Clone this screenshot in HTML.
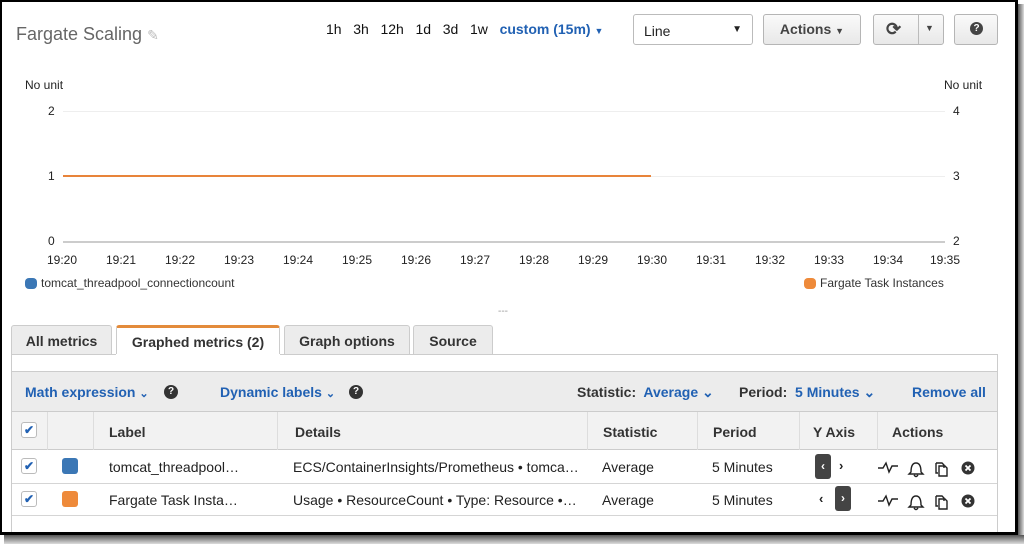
<!DOCTYPE html>
<html><head><meta charset="utf-8"><style>
*{box-sizing:border-box;margin:0;padding:0}
body{width:1024px;height:544px;background:#fff;font-family:"Liberation Sans",Arial,sans-serif;color:#222;position:relative;overflow:hidden}
.a{position:absolute;white-space:nowrap}
.btn{position:absolute;border:1px solid #b5b5b5;border-radius:3px;background:linear-gradient(#fafafa,#e8e8e8);font-size:14px;font-weight:bold;color:#444}
.blue{color:#2161b3}
.tab{position:absolute;top:325px;height:30px;border:1px solid #ccc;border-bottom:none;background:#ececec;font-size:14px;font-weight:bold;color:#333;text-align:center;line-height:30px;border-radius:3px 3px 0 0}
.cell{position:absolute;font-size:14px;line-height:16px}
.vl{position:absolute;width:1px;background:#ddd}
.hl{position:absolute;height:1px;background:#d5d5d5}
.cb{position:absolute;width:16px;height:16px;border:1px solid #bbb;border-radius:3px;background:#fff;color:#2161b3;font-size:12px;line-height:14px;text-align:center;font-weight:bold}
</style></head><body>
<!-- frame -->
<div class="a" style="left:0;top:0;width:1018px;height:535px;border:2px solid #000;border-right-width:3px;border-bottom-width:3px"></div>
<div class="a" style="left:1018px;top:4px;width:6px;height:540px;background:linear-gradient(90deg,#555,#ddd)"></div>
<div class="a" style="left:4px;top:535px;width:1020px;height:9px;background:linear-gradient(#555,#ddd)"></div>

<div class="a" style="left:16px;top:24px;font-size:18px;color:#666">Fargate Scaling <span style="color:#bbb;font-size:14px">✎</span></div>
<div class="a" style="left:326px;top:21px;font-size:14px;color:#111;word-spacing:0">1h&nbsp;&nbsp; 3h&nbsp;&nbsp; 12h&nbsp;&nbsp; 1d&nbsp;&nbsp; 3d&nbsp;&nbsp; 1w&nbsp;&nbsp; <b class="blue">custom (15m)</b> <span class="blue" style="font-size:9px">▼</span></div>
<div class="a" style="left:633px;top:14px;width:120px;height:31px;border:1px solid #bbb;border-radius:3px;font-size:14px;padding:8px 10px">Line<span style="position:absolute;right:10px;top:9px;font-size:10px">▼</span></div>
<div class="btn" style="left:763px;top:14px;width:98px;height:31px;line-height:29px;text-align:center">Actions <span style="font-size:9px">▼</span></div>
<div class="btn" style="left:873px;top:14px;width:71px;height:31px"><span style="position:absolute;left:12px;top:4px;font-size:18px">⟳</span><span style="position:absolute;left:44px;top:0;width:1px;height:29px;background:#bbb"></span><span style="position:absolute;left:51px;top:8px;font-size:9px">▼</span></div>
<div class="btn" style="left:954px;top:14px;width:44px;height:31px"><span style="position:absolute;left:15px;top:7px;width:13px;height:13px;border-radius:50%;background:#444;color:#fff;font-size:10px;line-height:13px;text-align:center">?</span></div>

<!-- chart -->
<div class="a" style="left:25px;top:78px;font-size:12px">No unit</div>
<div class="a" style="left:944px;top:78px;font-size:12px">No unit</div>
<div class="a" style="left:48px;top:104px;font-size:12px">2</div>
<div class="a" style="left:48px;top:169px;font-size:12px">1</div>
<div class="a" style="left:48px;top:234px;font-size:12px">0</div>
<div class="a" style="left:953px;top:104px;font-size:12px">4</div>
<div class="a" style="left:953px;top:169px;font-size:12px">3</div>
<div class="a" style="left:953px;top:234px;font-size:12px">2</div>
<div class="a" style="left:63px;top:111px;width:882px;height:1px;background:#eee"></div>
<div class="a" style="left:63px;top:176px;width:882px;height:1px;background:#eee"></div>
<div class="a" style="left:63px;top:241px;width:882px;height:2px;background:#ccc"></div>
<div class="a" style="left:63px;top:175px;width:588px;height:2px;background:#e8843a"></div>
<div class="a" style="left:0;top:253px;width:1024px;height:16px;font-size:12px">
<span class="a" style="left:47px">19:20</span><span class="a" style="left:106px">19:21</span><span class="a" style="left:165px">19:22</span><span class="a" style="left:224px">19:23</span><span class="a" style="left:283px">19:24</span><span class="a" style="left:342px">19:25</span><span class="a" style="left:401px">19:26</span><span class="a" style="left:460px">19:27</span><span class="a" style="left:519px">19:28</span><span class="a" style="left:578px">19:29</span><span class="a" style="left:637px">19:30</span><span class="a" style="left:696px">19:31</span><span class="a" style="left:755px">19:32</span><span class="a" style="left:814px">19:33</span><span class="a" style="left:873px">19:34</span><span class="a" style="left:930px">19:35</span></div>
<div class="a" style="left:25px;top:278px;width:12px;height:11px;border-radius:4px;background:#3b77b5"></div>
<div class="a" style="left:41px;top:276px;font-size:12px;color:#333">tomcat_threadpool_connectioncount</div>
<div class="a" style="left:804px;top:278px;width:12px;height:11px;border-radius:4px;background:#ee8a3a"></div>
<div class="a" style="left:820px;top:276px;font-size:12px;color:#333">Fargate Task Instances</div>
<div class="a" style="left:498px;top:306px;font-size:10px;color:#999">---</div>

<!-- tabs -->
<div class="tab" style="left:11px;width:101px">All metrics</div>
<div class="tab" style="left:116px;width:164px;background:#fff;border-top:3px solid #e38b3b;height:31px;line-height:28px">Graphed metrics (2)</div>
<div class="tab" style="left:284px;width:126px">Graph options</div>
<div class="tab" style="left:413px;width:80px">Source</div>
<div class="a" style="left:11px;top:354px;width:987px;height:178px;border:1px solid #ccc;border-bottom:none"></div>
<div class="a" style="left:116px;top:354px;width:164px;height:2px;background:#fff"></div>
<div class="a" style="left:12px;top:371px;width:985px;height:41px;background:#ececec;border-top:1px solid #ccc;border-bottom:1px solid #ccc"></div>
<div class="a blue" style="left:25px;top:384px;font-size:14px;font-weight:bold">Math expression <span style="font-size:11px">⌄</span></div>
<div class="a" style="left:164px;top:385px;width:14px;height:14px;border-radius:50%;background:#333;color:#fff;font-size:10px;line-height:14px;text-align:center;font-weight:bold">?</div>
<div class="a blue" style="left:220px;top:384px;font-size:14px;font-weight:bold">Dynamic labels <span style="font-size:11px">⌄</span></div>
<div class="a" style="left:349px;top:385px;width:14px;height:14px;border-radius:50%;background:#333;color:#fff;font-size:10px;line-height:14px;text-align:center;font-weight:bold">?</div>
<div class="a" style="left:577px;top:384px;font-size:14px;font-weight:bold;color:#333">Statistic:&nbsp; <span class="blue">Average ⌄</span></div>
<div class="a" style="left:739px;top:384px;font-size:14px;font-weight:bold;color:#333">Period:&nbsp; <span class="blue">5 Minutes ⌄</span></div>
<div class="a blue" style="left:912px;top:384px;font-size:14px;font-weight:bold">Remove all</div>

<!-- table header -->
<div class="a" style="left:12px;top:412px;width:985px;height:38px;background:#f2f2f2;border-bottom:1px solid #ccc"></div>
<div class="vl" style="left:47px;top:412px;height:38px"></div>
<div class="vl" style="left:93px;top:412px;height:38px"></div>
<div class="vl" style="left:277px;top:412px;height:38px"></div>
<div class="vl" style="left:587px;top:412px;height:38px"></div>
<div class="vl" style="left:697px;top:412px;height:38px"></div>
<div class="vl" style="left:799px;top:412px;height:38px"></div>
<div class="vl" style="left:877px;top:412px;height:38px"></div>
<div class="cb" style="left:21px;top:422px">✔</div>
<div class="cell" style="left:109px;top:424px;font-weight:bold;color:#333">Label</div>
<div class="cell" style="left:295px;top:424px;font-weight:bold;color:#333">Details</div>
<div class="cell" style="left:603px;top:424px;font-weight:bold;color:#333">Statistic</div>
<div class="cell" style="left:713px;top:424px;font-weight:bold;color:#333">Period</div>
<div class="cell" style="left:813px;top:424px;font-weight:bold;color:#333">Y Axis</div>
<div class="cell" style="left:892px;top:424px;font-weight:bold;color:#333">Actions</div>

<!-- rows -->
<div class="hl" style="left:12px;top:483px;width:985px"></div>
<div class="hl" style="left:12px;top:515px;width:985px"></div>
<div class="cb" style="left:21px;top:458px">✔</div>
<div class="a" style="left:62px;top:458px;width:16px;height:16px;border-radius:3px;background:#3b77b5"></div>
<div class="cell" style="left:109px;top:459px">tomcat_threadpool…</div>
<div class="cell" style="left:293px;top:459px">ECS/ContainerInsights/Prometheus • tomca…</div>
<div class="cell" style="left:602px;top:459px">Average</div>
<div class="cell" style="left:712px;top:459px">5 Minutes</div>
<div class="a" style="left:815px;top:454px;width:16px;height:25px;border-radius:3px;background:#444;color:#fff;font-size:12px;text-align:center;line-height:25px;font-weight:bold">‹</div>
<div class="a" style="left:839px;top:458px;font-size:13px;font-weight:bold">›</div>
<div class="cb" style="left:21px;top:491px">✔</div>
<div class="a" style="left:62px;top:491px;width:16px;height:16px;border-radius:3px;background:#ee8a3a"></div>
<div class="cell" style="left:109px;top:492px">Fargate Task Insta…</div>
<div class="cell" style="left:293px;top:492px">Usage • ResourceCount • Type: Resource •…</div>
<div class="cell" style="left:602px;top:492px">Average</div>
<div class="cell" style="left:712px;top:492px">5 Minutes</div>
<div class="a" style="left:819px;top:491px;font-size:13px;font-weight:bold">‹</div>
<div class="a" style="left:835px;top:486px;width:16px;height:25px;border-radius:3px;background:#444;color:#fff;font-size:12px;text-align:center;line-height:25px;font-weight:bold">›</div>

<svg class="a" style="left:876px;top:456px" width="100" height="60" viewBox="0 0 100 60">
<g fill="none" stroke="#222" stroke-width="1.4">
<path d="M2 12h5l3-5 3 9 3-6h6"/><path d="M2 45h5l3-5 3 9 3-6h6"/>
<path d="M35 16q0-9 5-9t5 9l2 2h-14l2-2zM38 19q2 3 4 0"/><path d="M35 49q0-9 5-9t5 9l2 2h-14l2-2zM38 52q2 3 4 0"/>
<path d="M60 7h6l2 2v3M60 7v10h2M63 10h6l2 2v8h-8z"/><path d="M60 40h6l2 2v3M60 40v10h2M63 43h6l2 2v8h-8z"/>
</g>
<g fill="#333"><circle cx="92" cy="12" r="6.5"/><circle cx="92" cy="45" r="6.5"/></g>
<g stroke="#fff" stroke-width="1.8"><path d="M89.5 9.5l5 5M94.5 9.5l-5 5M89.5 42.5l5 5M94.5 42.5l-5 5"/></g>
</svg>
</body></html>
